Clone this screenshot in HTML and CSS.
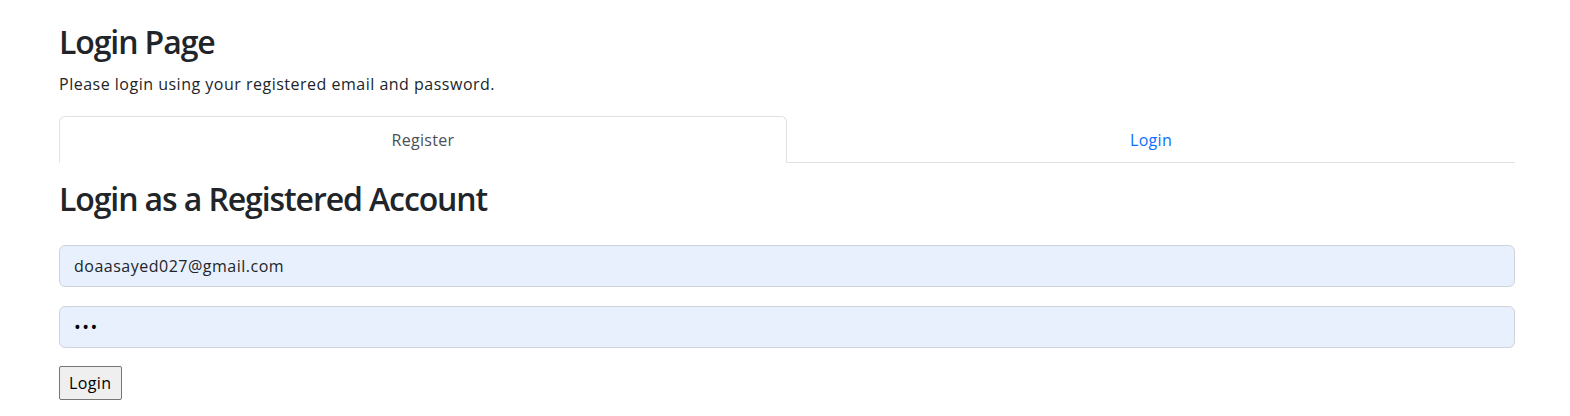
FILE: index.html
```html
<!DOCTYPE html>
<html lang="en">
<head>
<meta charset="utf-8">
<title>Login Page</title>
<link rel="stylesheet" href="styles.css">
</head>
<body>
<div class="container">
  <h2 class="title">Login Page</h2>
  <p class="intro">Please login using your registered email and password.</p>
  <ul class="tabs">
    <li class="tab-item"><a class="tab-link active">Register</a></li>
    <li class="tab-item"><a class="tab-link">Login</a></li>
  </ul>
  <h2 class="subtitle">Login as a Registered Account</h2>
  <form class="login-form">
    <input class="field field-email" type="email" value="doaasayed027@gmail.com">
    <input class="field field-pass" type="password" value="abc">
    <button class="btn" type="button">Login</button>
  </form>
</div>
</body>
</html>
```
FILE: styles.css
```css
* { box-sizing: border-box; }
body {
  margin: 0;
  background: #fff;
  color: #212529;
  font-family: "Open Sans", "Noto Sans", sans-serif;
  font-size: 16px;
  line-height: 1.5;
}
.container {
  padding: 23px 55px 0 59px;
}
.title, .subtitle {
  font-size: 32px;
  font-weight: 600;
  line-height: 1.2;
  letter-spacing: -1.1px;
  margin: 0 0 11px;
  color: #212529;
}
.intro {
  margin: 0 0 20px;
  letter-spacing: 0.5px;
}
.tabs {
  list-style: none;
  margin: 0;
  padding: 0;
  display: flex;
  border-bottom: 1px solid #dee2e6;
}
.tab-item {
  flex: 1 1 0;
  margin-bottom: -1px;
}
.tab-link {
  display: block;
  text-align: center;
  padding: 11px 16px 10px;
  line-height: 24px;
  border: 1px solid transparent;
  border-top-left-radius: 6px;
  border-top-right-radius: 6px;
  color: #0d6efd;
  letter-spacing: 0.3px;
  cursor: pointer;
}
.tab-link.active {
  color: #495057;
  background: #fff;
  border-color: #dee2e6 #dee2e6 #fff;
}
.subtitle {
  margin: 17px 0 26px;
}
.login-form {
  display: flex;
  flex-direction: column;
  align-items: flex-start;
}
.field {
  display: block;
  width: 100%;
  height: 42px;
  padding: 0 12px 0 14px;
  font-family: inherit;
  font-size: 16px;
  letter-spacing: 0.5px;
  color: #212529;
  background: #e8f0fe;
  border: 1px solid #ced4da;
  border-radius: 6px;
  outline: none;
}
.field-email { margin-bottom: 19px; }
.field-pass { margin-bottom: 18px; letter-spacing: 1.5px; font-size: 18px; color: #000; }
.btn {
  font-family: inherit;
  font-size: 16px;
  line-height: 24px;
  height: 34px;
  padding: 4px 9px;
  color: #000;
  background: #efefef;
  border: 1px solid #767676;
  border-radius: 2px;
  letter-spacing: 0.4px;
}
```
